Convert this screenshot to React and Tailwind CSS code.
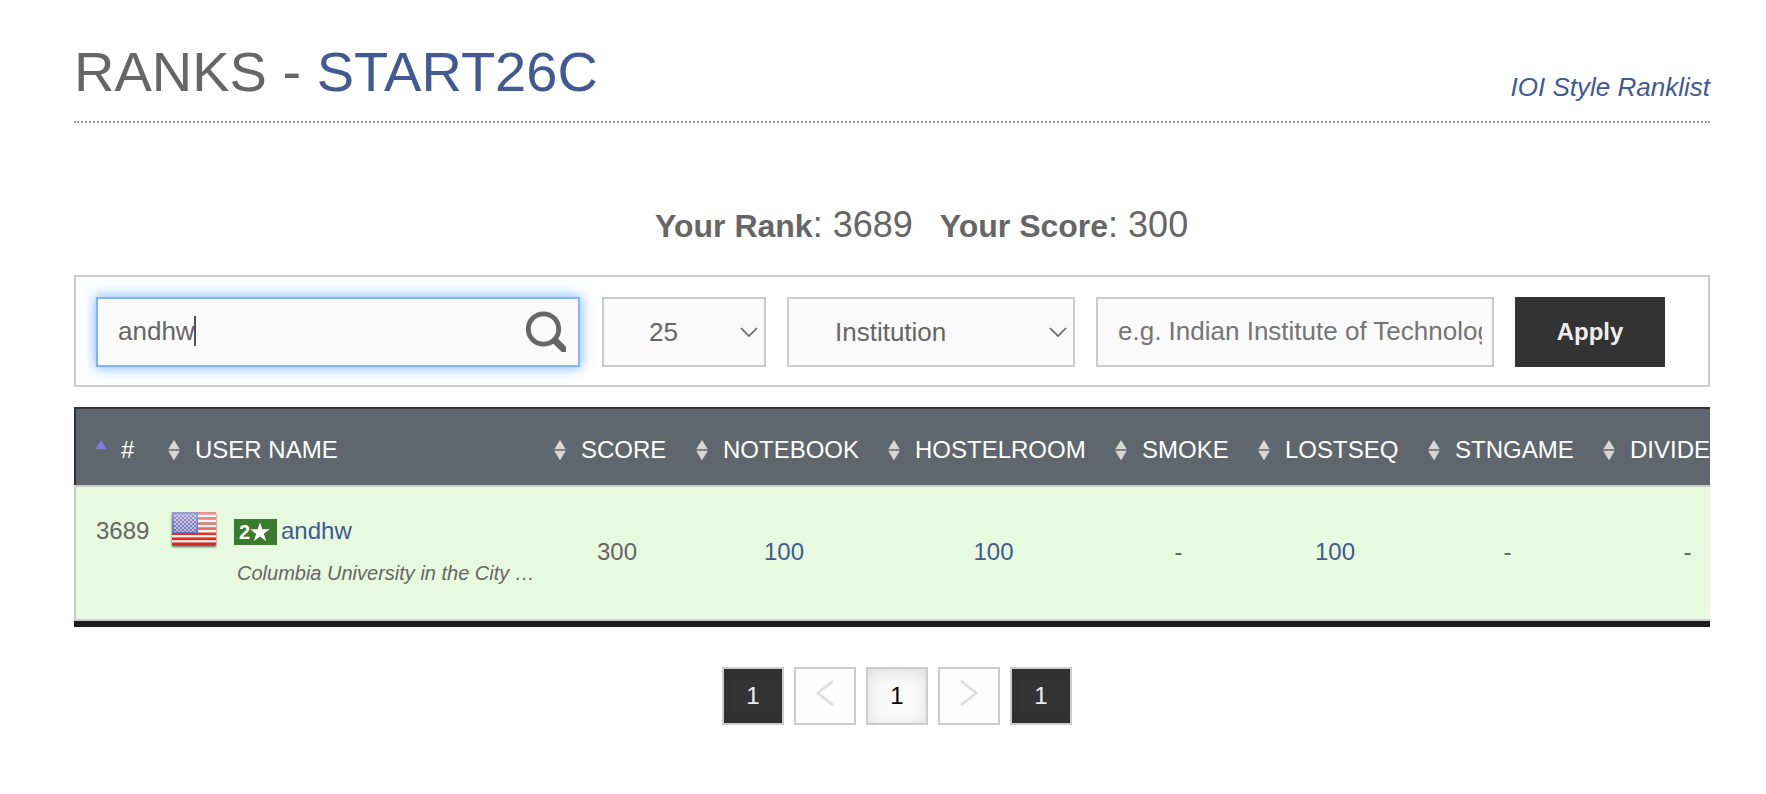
import React from "react";

const columns = [
  { label: "SCORE", width: "w-[142px]", value: "300" },
  { label: "NOTEBOOK", width: "w-[192px]", value: "100", link: true },
  { label: "HOSTELROOM", width: "w-[227px]", value: "100", link: true },
  { label: "SMOKE", width: "w-[143px]", value: "-" },
  { label: "LOSTSEQ", width: "w-[170px]", value: "100", link: true },
  { label: "STNGAME", width: "w-[175px]", value: "-" },
  { label: "DIVIDEAB", width: "w-[185px]", value: "-" },
];

function SortIcon() {
  return (
    <svg width="12" height="20" viewBox="0 0 12 20" className="shrink-0" fill="#d6d6d6">
      <path d="M6 0 L11.8 9.3 H0.2 Z" />
      <path d="M6 20.4 L0.2 10.7 H11.8 Z" />
    </svg>
  );
}

function SortedIcon() {
  return (
    <svg width="12" height="20" viewBox="0 0 12 20" className="shrink-0" fill="#7f7fdb">
      <path d="M6 0 L11.8 9.3 H0.2 Z" />
    </svg>
  );
}

function Chevron() {
  return (
    <svg width="18" height="11" viewBox="0 0 18 11" fill="none" stroke="#666" strokeWidth="1.7">
      <path d="M1 1 L9 9 L17 1" />
    </svg>
  );
}

function SearchIcon() {
  return (
    <svg width="40" height="41" viewBox="0 0 40 41" fill="none" stroke="#666">
      <circle cx="17.5" cy="18" r="15.2" strokeWidth="4.8" />
      <path d="M28.5 29 L40 40.5" strokeWidth="6.8" />
    </svg>
  );
}

function Flag() {
  const stripes = [0, 1, 2, 3, 4, 5, 6];
  return (
    <svg width="48" height="38" viewBox="0 0 48 38">
      <defs>
        <linearGradient id="gloss" x1="0" y1="0" x2="0" y2="1">
          <stop offset="0" stopColor="#fff" stopOpacity="0.5" />
          <stop offset="0.64" stopColor="#fff" stopOpacity="0.25" />
          <stop offset="0.66" stopColor="#fff" stopOpacity="0" />
          <stop offset="1" stopColor="#000" stopOpacity="0.06" />
        </linearGradient>
        <pattern id="stars" width="4" height="4" patternUnits="userSpaceOnUse">
          <rect width="2" height="2" fill="#a3a3d2" />
          <rect x="2" y="2" width="2" height="2" fill="#a3a3d2" />
        </pattern>
        <filter id="shade" x="-10%" y="-10%" width="120%" height="130%">
          <feGaussianBlur stdDeviation="1.1" />
        </filter>
      </defs>
      <rect x="2" y="3" width="44" height="33" fill="#000" opacity="0.6" filter="url(#shade)" />
      <rect x="2" y="1" width="44" height="33" rx="1" fill="#f8efec" />
      {stripes.map((i) => (
        <rect key={i} x="2" y={1 + i * 5.08} width="44" height="2.7" fill="#d92b24" />
      ))}
      <rect x="2" y="1" width="26" height="21.5" fill="#3b3f9e" />
      <rect x="4" y="3" width="22.5" height="18" fill="url(#stars)" />
      <rect x="2" y="1" width="44" height="33" rx="1" fill="url(#gloss)" />
    </svg>
  );
}

function Star() {
  return (
    <svg width="20" height="20" viewBox="0 0 20 20" fill="#fff">
      <path d="M10 0.2 L12.35 7.3 H19.8 L13.8 11.8 L16.1 19 L10 14.6 L3.9 19 L6.2 11.8 L0.2 7.3 H7.65 Z" />
    </svg>
  );
}

function PageArrow({ flip }) {
  return (
    <svg width="18" height="26" viewBox="0 0 18 26" fill="none" stroke="#dcdcdc" strokeWidth="2.4" className={flip ? "rotate-180" : ""}>
      <path d="M17 1 L1.5 13 L17 25" />
    </svg>
  );
}

export default function App() {
  return (
    <div className="h-[794px] w-full overflow-hidden bg-white pr-14 pl-[74px] text-[#666]" style={{ fontFamily: '"Liberation Sans", Arial, sans-serif' }}>
      <header className="flex h-[123px] items-start justify-between border-b-2 border-dotted border-[#999]">
        <h1 className="pt-10 text-[56px] leading-[64px] font-normal whitespace-nowrap">
          RANKS - <a className="text-[#425993]">START26C</a>
        </h1>
        <a className="pt-[71px] text-[26px] leading-8 text-[#425993] italic">IOI Style Ranklist</a>
      </header>

      <div className="flex h-[152px] items-start pt-[78px] pl-[581px] text-[36px] leading-[48px] whitespace-pre">
        <span><b className="text-[32px]">Your Rank</b>: 3689</span>
        <span className="ml-[27px]"><b className="text-[32px]">Your Score</b>: 300</span>
      </div>

      <section className="flex h-28 items-center border-2 border-[#ccc] pt-0.5 pl-5 text-[26px]">
        <div className="flex h-[70px] w-[484px] items-center justify-between border-2 border-[#7fb6fb] bg-[#fafafa] pr-3 pb-0.5 pl-5 shadow-[0_0_12px_1px_#7fb6fb]">
          <span className="flex items-center">
            <span className="leading-8">andhw</span>
            <span className="-ml-px h-[30px] w-0.5 bg-[#555]" />
          </span>
          <SearchIcon />
        </div>
        <div className="ml-[22px] flex h-[70px] w-[164px] items-center justify-between border-2 border-[#ccc] bg-[#fafafa] pr-1.5 pl-[45px]">
          <span>25</span>
          <Chevron />
        </div>
        <div className="ml-[21px] flex h-[70px] w-[288px] items-center justify-between border-2 border-[#ccc] bg-[#fafafa] pr-1.5 pl-[46px]">
          <span>Institution</span>
          <Chevron />
        </div>
        <input
          className="ml-[21px] h-[70px] w-[398px] border-2 border-[#ccc] bg-[#fafafa] pr-2.5 pb-0.5 pl-5 placeholder:text-[#757575]"
          placeholder="e.g. Indian Institute of Technology"
        />
        <button className="ml-[21px] h-[70px] w-[150px] bg-[#333] text-2xl font-bold text-[#eee]">Apply</button>
      </section>

      <section className="mt-5 overflow-hidden border-b-6 border-[#1b1b1b] text-2xl">
        <div className="flex h-[78px] w-[1708px] border-t-2 border-l-2 border-[#333] bg-[#5f666d] pt-1.5 text-white">
          <div className="flex w-[84px] shrink-0 items-center pl-[19px]">
            <SortedIcon />
            <span className="pl-[14px]">#</span>
          </div>
          <div className="flex w-[386px] shrink-0 items-center pl-2">
            <SortIcon />
            <span className="pl-[15px]">USER NAME</span>
          </div>
          {columns.map((c) => (
            <div key={c.label} className={`flex shrink-0 items-center pl-2 ${c.width}`}>
              <SortIcon />
              <span className="pl-[15px]">{c.label}</span>
            </div>
          ))}
        </div>
        <div className="flex h-[136px] w-[1708px] border-2 border-[#ccc] bg-[#e7fadf]">
          <div className="w-[84px] shrink-0 pt-7 pl-5 leading-8">3689</div>
          <div className="flex w-[386px] shrink-0 items-start pt-6 pl-[10px]">
            <Flag />
            <div className="pt-1 pl-4">
              <div className="flex items-center leading-8">
                <span className="mt-0.5 flex h-[26px] w-[43px] items-center bg-[#3a7b2d] pl-[5px] text-xl font-bold text-white">
                  2<Star />
                </span>
                <a className="pl-1 text-[#425993]">andhw</a>
              </div>
              <div className="pt-2.5 pl-[3px] text-xl leading-8 whitespace-nowrap italic">Columbia University in the City …</div>
            </div>
          </div>
          {columns.map((c) => (
            <div key={c.label} className={`flex shrink-0 items-center justify-center pb-[3px] ${c.width} ${c.link ? "text-[#425993]" : ""}`}>
              {c.value}
            </div>
          ))}
        </div>
      </section>

      <nav className="mt-10 flex gap-2.5 pl-[648px] text-2xl">
        <a className="flex h-[58px] w-[62px] items-center justify-center border-2 border-[#ccc] bg-[#333] text-[#eee] shadow-[inset_0_0_12px_rgba(0,0,0,0.12)]">1</a>
        <a className="flex h-[58px] w-[62px] items-center justify-center border-2 border-[#ccc] bg-[#fdfdfd] pb-1.5">
          <PageArrow />
        </a>
        <a className="flex h-[58px] w-[62px] items-center justify-center border-2 border-[#ccc] bg-[#fafafa] text-black shadow-[inset_0_3px_16px_rgba(0,0,0,0.12)]">1</a>
        <a className="flex h-[58px] w-[62px] items-center justify-center border-2 border-[#ccc] bg-[#fdfdfd] pb-1.5">
          <PageArrow flip />
        </a>
        <a className="flex h-[58px] w-[62px] items-center justify-center border-2 border-[#ccc] bg-[#333] text-[#eee] shadow-[inset_0_0_12px_rgba(0,0,0,0.12)]">1</a>
      </nav>
    </div>
  );
}
